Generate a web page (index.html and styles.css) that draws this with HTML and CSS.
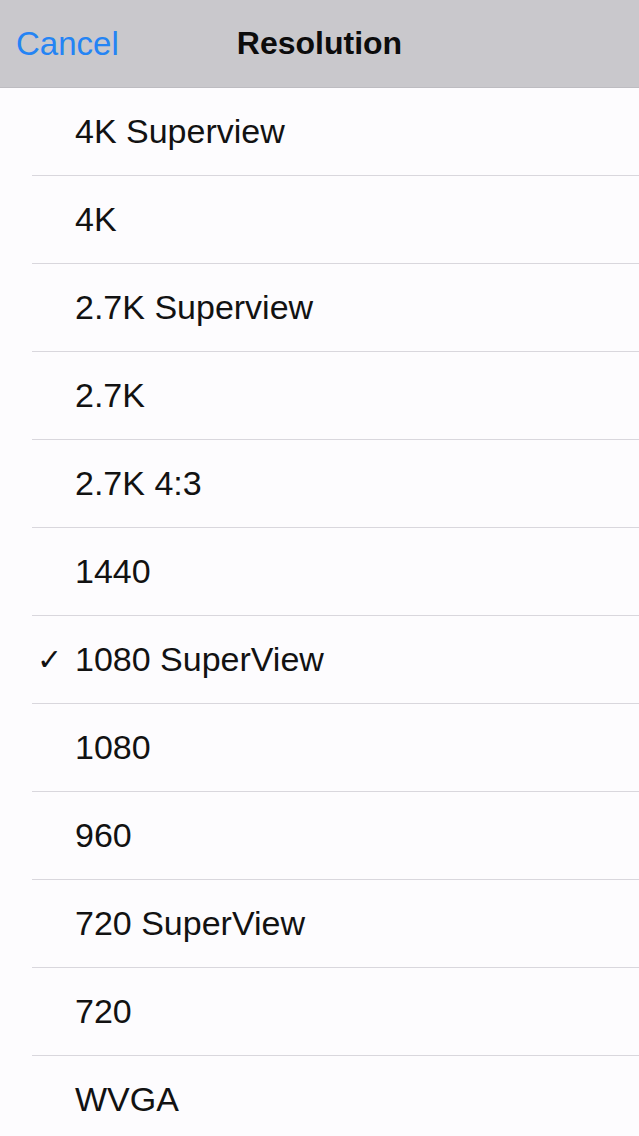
FILE: index.html
```html
<!DOCTYPE html>
<html>
<head>
<meta charset="utf-8">
<link rel="stylesheet" href="styles.css">
</head>
<body>
<header class="navbar">
  <span class="cancel">Cancel</span>
  <span class="title">Resolution</span>
</header>
<ul class="list">
  <li class="row"><span class="check"></span><span class="label">4K Superview</span></li>
  <li class="row"><span class="check"></span><span class="label">4K</span></li>
  <li class="row"><span class="check"></span><span class="label">2.7K Superview</span></li>
  <li class="row"><span class="check"></span><span class="label">2.7K</span></li>
  <li class="row"><span class="check"></span><span class="label">2.7K 4:3</span></li>
  <li class="row"><span class="check"></span><span class="label">1440</span></li>
  <li class="row selected"><span class="check">✓</span><span class="label">1080 SuperView</span></li>
  <li class="row"><span class="check"></span><span class="label">1080</span></li>
  <li class="row"><span class="check"></span><span class="label">960</span></li>
  <li class="row"><span class="check"></span><span class="label">720 SuperView</span></li>
  <li class="row"><span class="check"></span><span class="label">720</span></li>
  <li class="row last"><span class="check"></span><span class="label">WVGA</span></li>
</ul>
</body>
</html>
```
FILE: styles.css
```css
html, body {
  margin: 0;
  padding: 0;
  background: #fdfcfe;
  font-family: "Liberation Sans", Arial, sans-serif;
  overflow: hidden;
}
.navbar {
  position: relative;
  height: 88px;
  background: #c9c8cc;
  display: flex;
  align-items: center;
  justify-content: center;
  box-sizing: border-box;
  border-bottom: 1px solid #bdbcc1;
}
.cancel {
  position: absolute;
  left: 16px;
  top: 0;
  line-height: 88px;
  font-size: 33px;
  color: #2484f4;
}
.title {
  font-size: 32px;
  font-weight: bold;
  color: #0c0c0c;
}
.list {
  list-style: none;
  margin: 0;
  padding: 0 0 0 32px;
}
.row {
  height: 88px;
  display: flex;
  align-items: center;
  border-bottom: 1px solid #d9d7dd;
  box-sizing: border-box;
}
.check {
  width: 43px;
  padding-left: 5px;
  box-sizing: border-box;
  font-size: 30px;
  color: #111;
  font-family: "DejaVu Sans", sans-serif;
}
.label {
  font-size: 34px;
  color: #121212;
}
```
